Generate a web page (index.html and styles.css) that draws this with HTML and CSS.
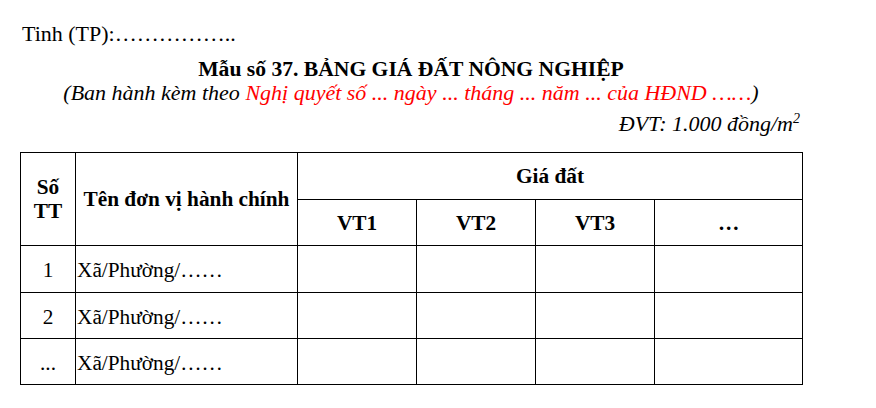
FILE: index.html
```html
<!DOCTYPE html>
<html lang="vi">
<head>
<meta charset="utf-8">
<title>Mẫu số 37</title>
<link rel="stylesheet" href="styles.css">
</head>
<body>
<div class="page">
  <div class="province">Tinh (TP):……………..</div>
  <div class="title">Mẫu số 37. BẢNG GIÁ ĐẤT NÔNG NGHIỆP</div>
  <div class="subtitle">(Ban hành kèm theo <span class="red">Nghị quyết số ... ngày ... tháng ... năm ... của HĐND ……</span>)</div>
  <div class="unit">ĐVT: 1.000 đồng/m<sup>2</sup></div>
  <table class="grid">
    <colgroup>
      <col class="c-stt"><col class="c-name"><col class="c-vt"><col class="c-vt"><col class="c-vt"><col class="c-more">
    </colgroup>
    <thead>
      <tr class="h1">
        <th rowspan="2">Số<br>TT</th>
        <th rowspan="2">Tên đơn vị hành chính</th>
        <th colspan="4">Giá đất</th>
      </tr>
      <tr class="h2">
        <th>VT1</th><th>VT2</th><th>VT3</th><th>…</th>
      </tr>
    </thead>
    <tbody>
      <tr class="r1"><td class="num">1</td><td class="name">Xã/Phường/……</td><td></td><td></td><td></td><td></td></tr>
      <tr class="r2"><td class="num">2</td><td class="name">Xã/Phường/……</td><td></td><td></td><td></td><td></td></tr>
      <tr class="r2"><td class="num">...</td><td class="name">Xã/Phường/……</td><td></td><td></td><td></td><td></td></tr>
    </tbody>
  </table>
</div>
</body>
</html>
```

FILE: styles.css
```css
html, body {
  margin: 0;
  padding: 0;
  background: #ffffff;
}
body {
  font-family: "Liberation Serif", "Times New Roman", serif;
  color: #000000;
}
.page {
  width: 782px;
  padding: 20px 0 0 20px;
}
.province {
  font-size: 22px;
  line-height: 28px;
  padding-left: 2px;
}
.title {
  font-size: 21.6px;
  font-weight: bold;
  text-align: center;
  line-height: 24px;
  margin-top: 9px;
}
.subtitle {
  font-size: 22px;
  font-style: italic;
  text-align: center;
  line-height: 24px;
}
.red {
  color: #ff0000;
}
.unit {
  font-size: 22px;
  font-style: italic;
  text-align: right;
  line-height: 24px;
  margin-top: 7px;
  padding-right: 2px;
}
.unit sup {
  font-size: 14px;
  line-height: 0;
  vertical-align: 8px;
}
.grid {
  border-collapse: collapse;
  table-layout: fixed;
  width: 782px;
  margin-top: 16px;
}
.c-stt { width: 55px; }
.c-name { width: 222px; }
.c-vt { width: 119px; }
.c-more { width: 148px; }
.grid th, .grid td {
  border: 1.5px solid #000;
  padding: 0;
  font-size: 21.3px;
  line-height: 24px;
}
.grid th {
  font-weight: bold;
  text-align: center;
  vertical-align: middle;
}
.h1 { height: 47px; }
.h2 { height: 46px; }
.r1 { height: 47px; }
.r2 { height: 46px; }
.grid td.num {
  text-align: center;
  vertical-align: middle;
  padding-top: 2px;
}
.grid td.name {
  text-align: left;
  vertical-align: middle;
  padding-left: 1px;
  padding-top: 2px;
}
```
